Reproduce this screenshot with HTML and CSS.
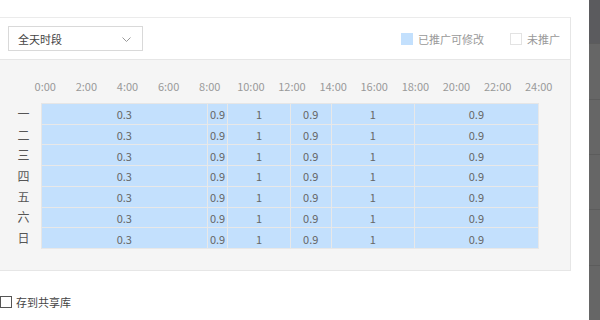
FILE: index.html
```html
<!DOCTYPE html>
<html lang="zh-CN">
<head>
<meta charset="utf-8">
<title>投放时段</title>
<link rel="stylesheet" href="styles.css">
</head>
<body>
<div class="page">
  <div class="main">
    <div class="panel">
      <div class="toolbar">
        <div class="select">
          <span class="select-text">全天时段</span>
          <svg class="chevron" width="9" height="5" viewBox="0 0 9 5"><path d="M0.5 0.5 L4.5 4.5 L8.5 0.5" fill="none" stroke="#999" stroke-width="1"/></svg>
        </div>
        <div class="legend">
          <span class="legend-item"><i class="swatch swatch-on"></i>已推广可修改</span>
          <span class="legend-item"><i class="swatch swatch-off"></i>未推广</span>
        </div>
      </div>
      <div class="schedule">
        <div class="hours">
          <span>0:00</span><span>2:00</span><span>4:00</span><span>6:00</span><span>8:00</span><span>10:00</span><span>12:00</span><span>14:00</span><span>16:00</span><span>18:00</span><span>20:00</span><span>22:00</span><span>24:00</span>
        </div>
        <div class="board">
          <div class="days">
            <span>一</span><span>二</span><span>三</span><span>四</span><span>五</span><span>六</span><span>日</span>
          </div>
          <div class="grid">
            <div class="cell span8">0.3</div><div class="cell span1">0.9</div><div class="cell span3">1</div><div class="cell span2">0.9</div><div class="cell span4">1</div><div class="cell span6">0.9</div>
            <div class="cell span8">0.3</div><div class="cell span1">0.9</div><div class="cell span3">1</div><div class="cell span2">0.9</div><div class="cell span4">1</div><div class="cell span6">0.9</div>
            <div class="cell span8">0.3</div><div class="cell span1">0.9</div><div class="cell span3">1</div><div class="cell span2">0.9</div><div class="cell span4">1</div><div class="cell span6">0.9</div>
            <div class="cell span8">0.3</div><div class="cell span1">0.9</div><div class="cell span3">1</div><div class="cell span2">0.9</div><div class="cell span4">1</div><div class="cell span6">0.9</div>
            <div class="cell span8">0.3</div><div class="cell span1">0.9</div><div class="cell span3">1</div><div class="cell span2">0.9</div><div class="cell span4">1</div><div class="cell span6">0.9</div>
            <div class="cell span8">0.3</div><div class="cell span1">0.9</div><div class="cell span3">1</div><div class="cell span2">0.9</div><div class="cell span4">1</div><div class="cell span6">0.9</div>
            <div class="cell span8">0.3</div><div class="cell span1">0.9</div><div class="cell span3">1</div><div class="cell span2">0.9</div><div class="cell span4">1</div><div class="cell span6">0.9</div>
          </div>
        </div>
      </div>
    </div>
    <label class="share"><span class="checkbox"></span><span class="share-text">存到共享库</span></label>
  </div>
  <div class="scrollbar">
    <div class="scroll-head"></div>
    <div class="scroll-seg seg1"></div>
    <div class="scroll-seg"></div>
    <div class="scroll-seg"></div>
    <div class="scroll-seg"></div>
    <div class="scroll-seg"></div>
  </div>
</div>
</body>
</html>
```
FILE: styles.css
```css
* { box-sizing: border-box; }
html, body { margin: 0; padding: 0; background: #fff; }
body {
  font-family: "Noto Sans CJK SC", "Noto Sans", sans-serif;
  font-size: 11px;
  color: #333;
}
.page {
  display: flex;
  width: 600px;
  height: 320px;
  overflow: hidden;
}
.main {
  width: 589px;
  padding-top: 17px;
}
.panel {
  width: 571px;
  border-top: 1px solid #ebebeb;
  border-right: 1px solid #e6e6e6;
}
.toolbar {
  height: 41px;
  display: flex;
  align-items: center;
  justify-content: space-between;
  padding: 0 10px 0 8px;
}
.select {
  width: 135px;
  height: 25px;
  border: 1px solid #d9d9d9;
  display: flex;
  align-items: center;
  justify-content: space-between;
  padding: 0 11px 0 9px;
  color: #444;
  line-height: 16px;
}
.chevron { display: block; margin-top: 1px; }
.legend {
  display: flex;
  align-items: center;
  gap: 26px;
  color: #999;
  line-height: 16px;
}
.legend-item {
  display: flex;
  align-items: center;
  gap: 5px;
}
.swatch {
  display: block;
  width: 12px;
  height: 12px;
}
.swatch-on { background: #c3e0fd; }
.swatch-off { background: #fff; border: 1px solid #e3e3e3; }
.schedule {
  background: #f5f5f5;
  border-top: 1px solid #e6e6e6;
  border-bottom: 1px solid #e6e6e6;
  padding: 18px 0 21px 0;
}
.hours {
  display: flex;
  padding-left: 24.7px;
  height: 16px;
  line-height: 16px;
  color: #999;
  margin-bottom: 9px;
}
.hours span {
  width: 41.14px;
  flex: none;
  text-align: center;
}
.board {
  display: flex;
  padding-left: 6px;
}
.days {
  width: 35px;
  height: 146px;
  padding-top: 1px;
  display: grid;
  grid-template-rows: repeat(7, 1fr);
  font-size: 12px;
  color: #555;
}
.days span {
  display: flex;
  align-items: center;
  justify-content: center;
  padding-bottom: 2px;
}
.grid {
  width: 498px;
  height: 146px;
  display: grid;
  grid-template-columns: repeat(24, 1fr);
  grid-template-rows: repeat(7, 1fr);
  border-top: 1px solid #e6e6e6;
  border-left: 1px solid #e6e6e6;
}
.cell {
  background: #c3e0fd;
  border-right: 1px solid #e8e8e8;
  border-bottom: 1px solid #e8e8e8;
  color: #666;
  display: flex;
  align-items: center;
  justify-content: center;
  padding-top: 1px;
}
.span1 { grid-column: span 1; }
.span2 { grid-column: span 2; }
.span3 { grid-column: span 3; }
.span4 { grid-column: span 4; }
.span6 { grid-column: span 6; }
.span8 { grid-column: span 8; }
.share {
  display: flex;
  align-items: center;
  gap: 4px;
  margin-top: 24px;
  height: 14px;
  color: #444;
}
.checkbox {
  display: block;
  width: 12px;
  height: 12px;
  border: 1px solid #555;
  background: #fff;
}
.scrollbar {
  width: 11px;
  height: 320px;
  background: #666;
  display: flex;
  flex-direction: column;
}
.scroll-head {
  height: 44px;
  background: #5b5b5e;
}
.scroll-seg {
  height: 56px;
  border-top: 1px solid #5c5c5c;
}
.seg1 { height: 56px; }
```
